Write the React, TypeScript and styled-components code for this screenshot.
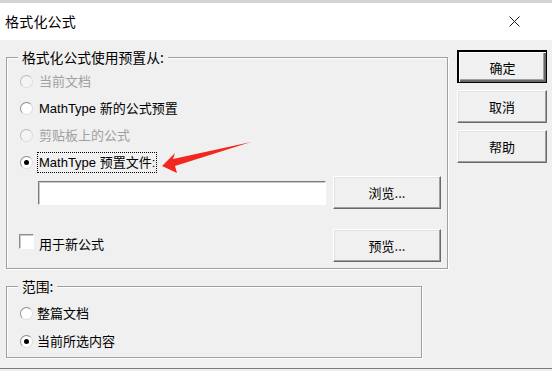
import * as React from "react";
import styled, { createGlobalStyle, css } from "styled-components";

const GlobalStyle = createGlobalStyle`
  html, body {
    margin: 0;
    padding: 0;
    background: #f0f0f0;
  }
  body {
    font-family: "Liberation Sans", "Noto Sans CJK SC", sans-serif;
    font-size: 13px;
    color: #000;
  }
`;

const Window = styled.div`
  position: relative;
  width: 552px;
  height: 369px;
  box-sizing: border-box;
  border-top: 3px solid #d4d4d4;
  border-bottom: 1px solid #7a7a7a;
  background: #f0f0f0;
  display: flex;
  flex-direction: column;
`;

const TitleBar = styled.div`
  height: 37px;
  flex: 0 0 37px;
  background: #fff;
  display: flex;
  align-items: center;
  justify-content: space-between;
  padding: 0 0 0 5px;
`;

const Title = styled.span`
  font-family: "Noto Sans CJK SC", sans-serif;
  font-size: 14px;
  letter-spacing: 0.2px;
  margin-top: -2px;
`;

const CloseBtn = styled.div`
  width: 46px;
  height: 37px;
  display: flex;
  align-items: center;
  justify-content: center;
  margin-right: 15px;
`;

const Body = styled.div`
  flex: 1;
  display: flex;
  padding-left: 6px;
`;

const LeftColumn = styled.div`
  display: flex;
  flex-direction: column;
`;

const Group = styled.div<{ $w: number; $h: number; $top: number }>`
  position: relative;
  box-sizing: border-box;
  width: ${(p) => p.$w}px;
  height: ${(p) => p.$h}px;
  margin-top: ${(p) => p.$top}px;
  border: 1px solid #a0a0a0;
  box-shadow: 1px 1px 0 #fff, inset 1px 1px 0 #fff;
  display: flex;
  flex-direction: column;
`;

const Legend = styled.span`
  position: absolute;
  top: -10px;
  left: 11px;
  padding: 0 4px;
  background: #f0f0f0;
  font-family: "Noto Sans CJK SC", sans-serif;
  font-size: 13.8px;
  line-height: 18px;
`;

const OptionRow = styled.div<{ $h: number }>`
  height: ${(p) => p.$h}px;
  display: flex;
  align-items: center;
  padding-left: 13px;
`;

const RadioCircle = styled.span<{ $checked?: boolean; $disabled?: boolean }>`
  position: relative;
  width: 13px;
  height: 13px;
  box-sizing: border-box;
  border-radius: 50%;
  border: 1px solid ${(p) => (p.$disabled ? "#bcbcbc" : "#8e8e8e")};
  border-right-color: #dcdcdc;
  border-bottom-color: #dcdcdc;
  background: ${(p) => (p.$disabled ? "#f4f4f4" : "#fff")};
  flex: 0 0 13px;
  ${(p) =>
    p.$checked &&
    css`
      &::after {
        content: "";
        position: absolute;
        left: 3px;
        top: 3px;
        width: 5px;
        height: 5px;
        border-radius: 50%;
        background: #000;
      }
    `}
`;

const OptionText = styled.span<{ $disabled?: boolean; $gap: number; $focus?: boolean }>`
  margin-left: ${(p) => p.$gap}px;
  color: ${(p) => (p.$disabled ? "#a0a0a0" : "#000")};
  line-height: 17px;
  white-space: nowrap;
  ${(p) =>
    p.$focus &&
    css`
      outline: 1px dotted #000;
      outline-offset: 1px;
    `}
`;

const FileRow = styled.div`
  height: 33px;
  display: flex;
  align-items: center;
  padding-left: 31px;
`;

const TextInput = styled.div`
  width: 288px;
  height: 24px;
  box-sizing: border-box;
  background: #fff;
  border: 1px solid;
  border-color: #7a7a7a #fff #fff #7a7a7a;
  box-shadow: inset 1px 1px 0 #c8c8c8;
  margin-right: 7px;
`;

const CheckRow = styled.div`
  height: 33px;
  margin-top: 20px;
  display: flex;
  align-items: center;
  padding-left: 12px;
`;

const CheckBox = styled.span`
  width: 15px;
  height: 15px;
  box-sizing: border-box;
  background: #fff;
  border: 1px solid;
  border-color: #8e8e8e #fff #fff #8e8e8e;
  box-shadow: inset 1px 1px 0 #c8c8c8;
  margin-bottom: 8px;
`;

const CheckText = styled.span`
  margin-left: 5px;
  margin-bottom: 5px;
  margin-right: auto;
`;

const Button = styled.div<{ $default?: boolean; $w: number }>`
  width: ${(p) => p.$w}px;
  height: 33px;
  box-sizing: border-box;
  display: flex;
  align-items: center;
  justify-content: center;
  font-family: "Noto Sans CJK SC", sans-serif;
  font-size: 13px;
  background: #f0f0f0;
  border: 1px solid;
  border-color: #fff #696969 #696969 #fff;
  box-shadow: inset -1px -1px 0 #a0a0a0, inset 1px 1px 0 #e3e3e3;
  ${(p) =>
    p.$default &&
    css`
      outline: 1px solid #000;
      outline-offset: -1px;
      border-width: 2px 1px 1px 2px;
      border-color: #000 #000 #000 #000;
      box-shadow: inset 1px 1px 0 #fff, inset -2px -2px 0 #696969,
        inset -3px -3px 0 #a0a0a0;
    `}
`;

const RightColumn = styled.div`
  display: flex;
  flex-direction: column;
  gap: 7px;
  margin-left: 9px;
  padding-top: 10px;
`;

const Arrow = styled.svg`
  position: absolute;
  left: 0;
  top: 0;
  pointer-events: none;
`;

interface OptionProps {
  label: string;
  checked?: boolean;
  disabled?: boolean;
  focus?: boolean;
  h: number;
  gap: number;
}

const Option = (props: OptionProps) => (
  <OptionRow $h={props.h}>
    <RadioCircle $checked={props.checked} $disabled={props.disabled} />
    <OptionText $disabled={props.disabled} $gap={props.gap} $focus={props.focus}>
      {props.label}
    </OptionText>
  </OptionRow>
);

const App = () => (
  <>
    <GlobalStyle />
    <Window>
      <TitleBar>
        <Title>格式化公式</Title>
        <CloseBtn>
          <svg width="11" height="11" viewBox="0 0 11 11">
            <path d="M0.5 0.5 L10.5 10.5 M10.5 0.5 L0.5 10.5" stroke="#1a1a1a" strokeWidth="1" />
          </svg>
        </CloseBtn>
      </TitleBar>
      <Body>
        <LeftColumn>
          <Group $w={442} $h={212} $top={17}>
            <Legend>格式化公式使用预置从:</Legend>
            <div style={{ height: 10 }} />
            <Option h={27} gap={6} label="当前文档" disabled />
            <Option h={27} gap={6} label="MathType 新的公式预置" />
            <Option h={27} gap={6} label="剪贴板上的公式" disabled />
            <Option h={27} gap={6} label="MathType 预置文件:" checked focus />
            <FileRow>
              <TextInput />
              <Button $w={108}>浏览...</Button>
            </FileRow>
            <CheckRow>
              <CheckBox />
              <CheckText>用于新公式</CheckText>
              <Button $w={108} style={{ marginRight: 6 }}>
                预览...
              </Button>
            </CheckRow>
          </Group>
          <Group $w={416} $h={72} $top={17}>
            <Legend>范围:</Legend>
            <div style={{ height: 12 }} />
            <Option h={28} gap={4} label="整篇文档" />
            <Option h={28} gap={4} label="当前所选内容" checked />
          </Group>
        </LeftColumn>
        <RightColumn>
          <Button $w={90} $default>
            确定
          </Button>
          <Button $w={90}>取消</Button>
          <Button $w={90}>帮助</Button>
        </RightColumn>
      </Body>
      <Arrow width="552" height="371" viewBox="0 0 552 371">
        <polygon
          points="162,163 177,170 175,163 251,139 173,156 175,150"
          fill="#f2271d"
        />
      </Arrow>
    </Window>
  </>
);

export default App;
